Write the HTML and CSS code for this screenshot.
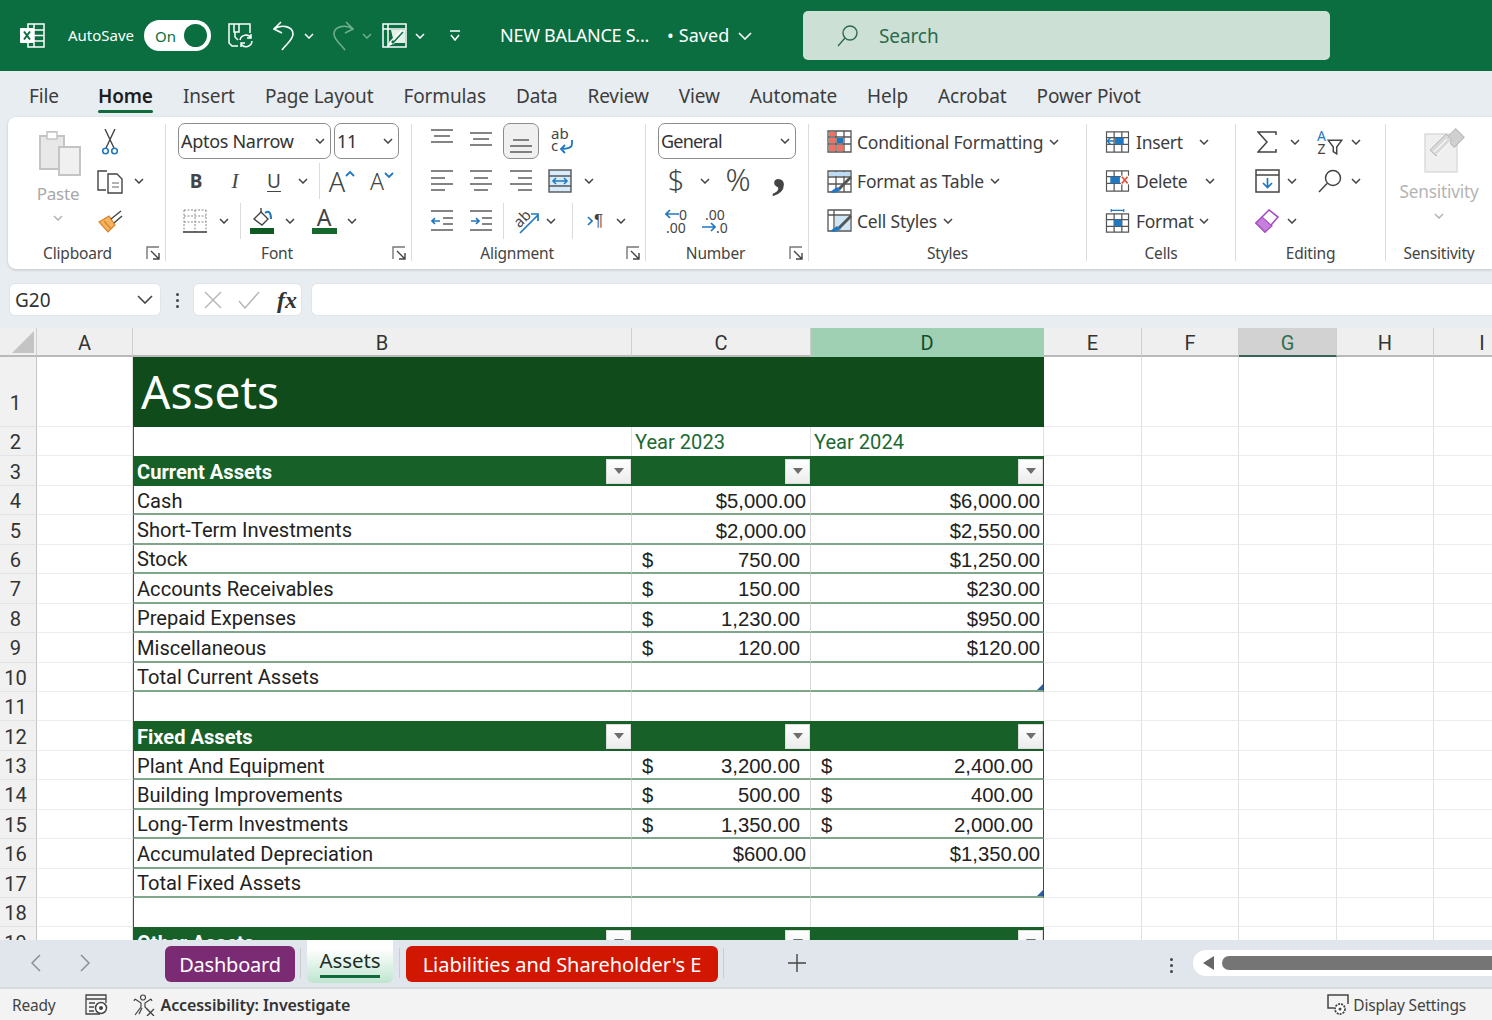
FILE: index.html
```html
<!DOCTYPE html>
<html lang="en">
<head>
<meta charset="utf-8">
<title>Assets - Excel</title>
<link rel="stylesheet" href="styles.css">
</head>
<body>
<svg class="defs" width="0" height="0" aria-hidden="true">
  <symbol id="chev" viewBox="0 0 10 6"><path d="M1 1l4 4 4-4" fill="none" stroke="#444" stroke-width="1.5"/></symbol>
  <symbol id="launch" viewBox="0 0 14 14"><path d="M1 13V1h12" fill="none" stroke="#777" stroke-width="1.4"/><path d="M5 5l8 8M13 7v6H7" fill="none" stroke="#444" stroke-width="1.4"/></symbol>
  <symbol id="tbl" viewBox="0 0 25 25"><path d="M1 2h23v21H1zM1 8h23M1 15h23M9 2v21M17 2v21" fill="none" stroke="#555" stroke-width="1.3"/></symbol>
</svg>

<header class="titlebar">
  <svg class="t-logo" width="25" height="25" viewBox="0 0 25 25"><path d="M8 1h16v23H8zM14 1v23M8 7h16M8 12.500h16M8 18h16" fill="none" stroke="#fff" stroke-width="1.5"/><rect x="0" y="5" width="14" height="15" rx="1" fill="#fff"/><path d="M4 8.500l6 8M10 8.500l-6 8" stroke="#0a6e40" stroke-width="2"/></svg>
  <span class="t-auto">AutoSave</span>
  <span class="toggle"><span class="on">On</span><span class="knob"></span></span>
  <svg class="t-save" width="26" height="25" viewBox="0 0 26 25"><path d="M10 23H4l-3-3V1h21v9M6 1v8h5V1M7 9v5l3 3" fill="none" stroke="#fff" stroke-width="1.5"/><path d="M12 17a6 6 0 0 1 11-2M24 18a6 6 0 0 1-11 3M23 11v4h-4M13 24v-4h4" fill="none" stroke="#fff" stroke-width="1.5"/></svg>
  <svg class="t-undo" width="22" height="30" viewBox="0 0 22 30"><path d="M8 1L1 8l8 4M1 8C8 3 20 5 20 13c0 6-7 10-11 16" fill="none" stroke="#fff" stroke-width="1.6"/></svg>
  <svg class="t-c1 tchev" width="10" height="6" viewBox="0 0 10 6"><path d="M1 1l4 4 4-4" fill="none" stroke="#fff" stroke-width="1.5"/></svg>
  <svg class="t-redo" width="22" height="30" viewBox="0 0 22 30"><path d="M14 1l7 7-8 4M21 8C14 3 2 5 2 13c0 6 7 10 11 16" fill="none" stroke="#6fae8f" stroke-width="1.6"/></svg>
  <svg class="t-c2 tchev" width="10" height="6" viewBox="0 0 10 6"><path d="M1 1l4 4 4-4" fill="none" stroke="#6fae8f" stroke-width="1.5"/></svg>
  <svg class="t-brush" width="25" height="25" viewBox="0 0 25 25"><path d="M1 1h23v23H1zM1 6h23M6 1v23" fill="none" stroke="#fff" stroke-width="1.5"/><path d="M9 7h14v13H12z" fill="#e3f0e8"/><path d="M23 8L11 21M20 7L8 19" stroke="#fff" stroke-width="1.4"/><path d="M21 9L10 21" stroke="#0a6e40" stroke-width="1.500"/><path d="M8 18l3 3-6 3z" fill="#fff"/></svg>
  <svg class="t-c3 tchev" width="10" height="6" viewBox="0 0 10 6"><path d="M1 1l4 4 4-4" fill="none" stroke="#fff" stroke-width="1.5"/></svg>
  <svg class="t-more" width="10" height="12" viewBox="0 0 10 12"><path d="M0 1h10M1 5l4 5 4-5" fill="none" stroke="#fff" stroke-width="1.5"/></svg>
  <span class="t-file">NEW BALANCE S...</span>
  <span class="t-saved">• Saved</span>
  <svg class="t-c4" width="14" height="8" viewBox="0 0 14 8"><path d="M1 1l6 6 6-6" fill="none" stroke="#fff" stroke-width="1.6"/></svg>
  <div class="search">
    <svg width="22" height="23" viewBox="0 0 22 23"><circle cx="13" cy="9" r="7" fill="none" stroke="#2c6a4b" stroke-width="1.4"/><path d="M8 14L1 22" stroke="#2c6a4b" stroke-width="1.4"/></svg>
    <span>Search</span>
  </div>
</header>

<nav class="tabs">
  <span>File</span><span class="active">Home</span><span>Insert</span><span>Page Layout</span><span>Formulas</span><span>Data</span><span>Review</span><span>View</span><span>Automate</span><span>Help</span><span>Acrobat</span><span>Power Pivot</span>
</nav>

<section class="ribbon">
  <div class="group g-clip">
    <div class="clip-body">
      <div class="paste">
        <svg width="44" height="48" viewBox="0 0 44 48"><path d="M2 7h8V3h8v4h8v33H2z" fill="#e8e8e8" stroke="#c4c4c4" stroke-width="2"/><rect x="9" y="3" width="10" height="7" fill="#fff" stroke="#c4c4c4" stroke-width="1.5"/><rect x="21" y="18" width="21" height="28" fill="#f0f0f0" stroke="#c4c4c4" stroke-width="2"/></svg>
        <span class="paste-t">Paste</span>
        <svg class="dim" width="10" height="6"><use href="#chev"/></svg>
      </div>
      <svg class="i-cut" width="16" height="26" viewBox="0 0 16 26"><path d="M3 0l9 19M13 0L4 19" stroke="#444" stroke-width="1.4" fill="none"/><circle cx="3.500" cy="22" r="2.800" fill="none" stroke="#1f78c1" stroke-width="1.6"/><circle cx="12.500" cy="22" r="2.800" fill="none" stroke="#1f78c1" stroke-width="1.6"/></svg>
      <span></span>
      <svg width="26" height="25" viewBox="0 0 26 25"><path d="M9 21H1V2h9" fill="none" stroke="#444" stroke-width="1.4"/><path d="M11 5h9l5 5v14H11z" fill="#fff" stroke="#444" stroke-width="1.4"/><path d="M15 14h7M15 18h7" stroke="#666" stroke-width="1.2"/></svg>
      <svg width="10" height="6"><use href="#chev"/></svg>
      <svg width="25" height="24" viewBox="0 0 25 24"><path d="M1 13L11 7l6 9-7 7z" fill="#f4b35e" stroke="#d9822b" stroke-width="1.2"/><path d="M13 10l10-8M16 14l8-7" stroke="#444" stroke-width="1.4"/><path d="M6 12l7 8" stroke="#d9822b" stroke-width="1.2"/></svg>
      <span></span>
    </div>
    <div class="lbl lbl-clip"><span>Clipboard</span><svg width="14" height="14"><use href="#launch"/></svg></div>
  </div>
  <i class="sep"></i>

  <div class="group g-font">
    <div class="rw r-sel">
      <div class="select s-font"><span>Aptos Narrow</span><svg width="10" height="6"><use href="#chev"/></svg></div>
      <div class="select s-size"><span>11</span><svg width="10" height="6"><use href="#chev"/></svg></div>
    </div>
    <div class="rw f2">
      <b class="glyph">B</b><em class="glyph ital">I</em><u class="glyph und">U</u>
      <svg width="10" height="6"><use href="#chev"/></svg>
      <i class="vsep"></i>
      <span class="bigA">A<svg width="10" height="7" viewBox="0 0 10 7"><path d="M1 6l4-4 4 4" fill="none" stroke="#1f78c1" stroke-width="1.8"/></svg></span>
      <span class="smA">A<svg width="10" height="7" viewBox="0 0 10 7"><path d="M1 1l4 4 4-4" fill="none" stroke="#1f78c1" stroke-width="1.8"/></svg></span>
    </div>
    <div class="rw f3">
      <svg width="24" height="24" viewBox="0 0 24 24"><path d="M1 1h22M1 7h22M1 13h22" stroke="#888" stroke-width="1" stroke-dasharray="2 1.500"/><path d="M1 1v22M23 1v22M12 1v22" stroke="#888" stroke-width="1" stroke-dasharray="2 1.500"/><path d="M0 23h24" stroke="#444" stroke-width="1.600"/></svg>
      <svg width="10" height="6"><use href="#chev"/></svg>
      <i class="vsep"></i>
      <svg width="26" height="27" viewBox="0 0 26 27"><path d="M5 12l7-7 7 7-6 6z" fill="none" stroke="#444" stroke-width="1.4"/><path d="M12 5V1" stroke="#444" stroke-width="1.4"/><path d="M16 6c4-3 6 0 6 6" fill="none" stroke="#1f78c1" stroke-width="2"/><rect x="1" y="21" width="24" height="6" fill="#0f5a22"/></svg>
      <svg width="10" height="6"><use href="#chev"/></svg>
      <span class="colorA"><span>A</span><i></i></span>
      <svg width="10" height="6"><use href="#chev"/></svg>
    </div>
    <div class="lbl"><span>Font</span><svg width="14" height="14"><use href="#launch"/></svg></div>
  </div>
  <i class="sep"></i>

  <div class="group g-align">
    <div class="rw a1">
      <svg class="al-top" width="22" height="15" viewBox="0 0 22 15"><path d="M0 1h22M3 7h16M0 13h22" stroke="#5c5c5c" stroke-width="1.700"/></svg>
      <svg class="al-mid" width="22" height="15" viewBox="0 0 22 15"><path d="M0 1h22M3 7h16M0 13h22" stroke="#5c5c5c" stroke-width="1.700"/></svg>
      <span class="active-btn"><svg width="22" height="15" viewBox="0 0 22 15"><path d="M3 2h16M0 8h22M0 14h22" stroke="#5c5c5c" stroke-width="1.700"/></svg></span>
      <svg class="wrap-i" width="26" height="30" viewBox="0 0 26 30"><text x="2" y="12" class="svt">ab</text><text x="2" y="24" class="svt">c</text><path d="M23 13v4c0 3-3 5-11 5M16 18l-4 4 4 4" fill="none" stroke="#1f78c1" stroke-width="1.800"/></svg>
    </div>
    <div class="rw a2">
      <svg width="22" height="22" viewBox="0 0 22 22"><path d="M0 1h22M0 8h14M0 14h22M0 20h14" stroke="#5c5c5c" stroke-width="1.700"/></svg>
      <svg width="22" height="22" viewBox="0 0 22 22"><path d="M0 1h22M4 8h14M0 14h22M4 20h14" stroke="#5c5c5c" stroke-width="1.700"/></svg>
      <svg width="22" height="22" viewBox="0 0 22 22"><path d="M0 1h22M8 8h14M0 14h22M8 20h14" stroke="#5c5c5c" stroke-width="1.700"/></svg>
      <svg width="24" height="24" viewBox="0 0 24 24"><rect x="1" y="1" width="22" height="22" fill="#d6ecfa" stroke="#555" stroke-width="1.400"/><path d="M1 7h22M1 17h22" stroke="#555" stroke-width="1.400"/><path d="M5 12h14M8 9l-3 3 3 3M16 9l3 3-3 3" fill="none" stroke="#1f78c1" stroke-width="1.500"/></svg>
      <svg width="10" height="6"><use href="#chev"/></svg>
    </div>
    <div class="rw a3">
      <svg width="22" height="22" viewBox="0 0 22 22"><path d="M0 1h22M12 8h10M12 14h10M0 20h22" stroke="#5c5c5c" stroke-width="1.700"/><path d="M9 11H1M4 8l-3 3 3 3" fill="none" stroke="#1f78c1" stroke-width="1.700"/></svg>
      <svg width="22" height="22" viewBox="0 0 22 22"><path d="M0 1h22M12 8h10M12 14h10M0 20h22" stroke="#5c5c5c" stroke-width="1.700"/><path d="M1 11h8M6 8l3 3-3 3" fill="none" stroke="#1f78c1" stroke-width="1.700"/></svg>
      <i class="vsep"></i>
      <svg width="30" height="30" viewBox="0 0 30 30"><text x="3" y="19" class="svt rot">ab</text><path d="M9 27L27 9M20 8h7v7" fill="none" stroke="#1f78c1" stroke-width="1.700"/></svg>
      <svg width="10" height="6"><use href="#chev"/></svg>
      <i class="vsep"></i>
      <span class="rtl"><svg width="6" height="10" viewBox="0 0 6 10"><path d="M1 1l4 4-4 4" fill="none" stroke="#1f78c1" stroke-width="1.700"/></svg>¶</span>
      <svg width="10" height="6"><use href="#chev"/></svg>
    </div>
    <div class="lbl"><span>Alignment</span><svg width="14" height="14"><use href="#launch"/></svg></div>
  </div>
  <i class="sep"></i>

  <div class="group g-num">
    <div class="rw r-sel">
      <div class="select s-num"><span>General</span><svg width="10" height="6"><use href="#chev"/></svg></div>
    </div>
    <div class="rw n2">
      <span class="sym">$</span>
      <svg width="10" height="6"><use href="#chev"/></svg>
      <span class="sym pct">%</span>
      <span class="comma">,</span>
    </div>
    <div class="rw n3">
      <span class="dec"><span class="d-a"><svg width="14" height="10" viewBox="0 0 14 10"><path d="M14 5H1M5 1L1 5l4 4" fill="none" stroke="#1f78c1" stroke-width="1.700"/></svg>0</span><span>.00</span></span>
      <span class="dec"><span>.00</span><span class="d-a"><svg width="14" height="10" viewBox="0 0 14 10"><path d="M0 5h13M9 1l4 4-4 4" fill="none" stroke="#1f78c1" stroke-width="1.700"/></svg>.0</span></span>
    </div>
    <div class="lbl"><span>Number</span><svg width="14" height="14"><use href="#launch"/></svg></div>
  </div>
  <i class="sep"></i>

  <div class="group g-styles">
    <div class="rw st">
      <svg width="25" height="25" viewBox="0 0 25 25"><use href="#tbl"/><rect x="2" y="9" width="6" height="5" fill="#f1705f"/><rect x="2" y="16" width="6" height="6" fill="#f1705f"/><rect x="2" y="3" width="6" height="4" fill="#f1705f"/><rect x="10" y="16" width="6" height="6" fill="#f1705f"/><rect x="10" y="9" width="6" height="5" fill="#1f78c1"/></svg>
      <span>Conditional Formatting</span><svg width="10" height="6"><use href="#chev"/></svg>
    </div>
    <div class="rw st">
      <svg width="25" height="25" viewBox="0 0 25 25"><use href="#tbl"/><rect x="2" y="3" width="21" height="4" fill="#bcdcf3"/><path d="M24 8L12 20" stroke="#555" stroke-width="3"/><path d="M10 18l4 3-7 3-4-1z" fill="#1f78c1"/></svg>
      <span>Format as Table</span><svg width="10" height="6"><use href="#chev"/></svg>
    </div>
    <div class="rw st">
      <svg width="25" height="25" viewBox="0 0 25 25"><path d="M1 2h23v21H1zM1 7h23M7 2v21" fill="none" stroke="#555" stroke-width="1.300"/><path d="M8 8h15v14H8z" fill="#cfe6f7"/><path d="M24 8L12 20" stroke="#555" stroke-width="3"/><path d="M10 18l4 3-7 3-4-1z" fill="#1f78c1"/></svg>
      <span>Cell Styles</span><svg width="10" height="6"><use href="#chev"/></svg>
    </div>
    <div class="lbl plain"><span>Styles</span></div>
  </div>
  <i class="sep"></i>

  <div class="group g-cells">
    <div class="rw ce ce-a">
      <svg width="25" height="24" viewBox="0 0 25 25"><use href="#tbl"/><rect x="10" y="8" width="9" height="7" fill="#1f78c1"/><path d="M9 11.500H2M5 8l-3 3.500L5 15" fill="none" stroke="#1f78c1" stroke-width="1.600"/></svg>
      <span>Insert</span><svg width="10" height="6"><use href="#chev"/></svg>
    </div>
    <div class="rw ce ce-b">
      <svg width="25" height="24" viewBox="0 0 25 25"><use href="#tbl"/><rect x="5" y="8" width="10" height="7" fill="#1f78c1"/><rect x="16" y="7" width="9" height="9" fill="#fff"/><path d="M17 8l6 7M23 8l-6 7" stroke="#e8503a" stroke-width="1.700"/></svg>
      <span>Delete</span><svg width="10" height="6"><use href="#chev"/></svg>
    </div>
    <div class="rw ce ce-a">
      <svg width="25" height="24" viewBox="0 0 25 25"><path d="M1 5h23v19H1zM1 11h23M1 18h23M9 5v19M17 5v19" fill="none" stroke="#555" stroke-width="1.300"/><rect x="9" y="11" width="8" height="7" fill="#1f78c1"/><path d="M6 1.500h13M6 0v3M19 0v3" stroke="#1f78c1" stroke-width="1.300"/></svg>
      <span>Format</span><svg width="10" height="6"><use href="#chev"/></svg>
    </div>
    <div class="lbl plain"><span>Cells</span></div>
  </div>
  <i class="sep"></i>

  <div class="group g-edit">
    <div class="rw e1">
      <svg width="20" height="22" viewBox="0 0 20 22"><path d="M19 4V1H1l9 10-9 10h18v-3" fill="none" stroke="#444" stroke-width="1.500"/></svg>
      <svg width="10" height="6"><use href="#chev"/></svg>
      <span></span>
      <span class="sort"><span class="az"><span class="a">A</span><span>Z</span></span><svg width="16" height="16" viewBox="0 0 14 14"><path d="M1 1h12L8.500 7v6l-3-2V7z" fill="none" stroke="#444" stroke-width="1.300"/></svg></span>
      <svg width="10" height="6"><use href="#chev"/></svg>
    </div>
    <div class="rw e2">
      <svg width="25" height="24" viewBox="0 0 25 24"><rect x="1" y="1" width="23" height="22" fill="none" stroke="#444" stroke-width="1.500"/><path d="M1 6h23" stroke="#444" stroke-width="1.500"/><path d="M12.500 9v9M8 14l4.500 4.500L17 14" fill="none" stroke="#1f78c1" stroke-width="1.700"/></svg>
      <svg width="10" height="6"><use href="#chev"/></svg>
      <span></span>
      <svg width="24" height="24" viewBox="0 0 24 24"><circle cx="15" cy="9" r="7.500" fill="none" stroke="#444" stroke-width="1.500"/><path d="M9 14.500L1 23" stroke="#444" stroke-width="1.500"/></svg>
      <svg width="10" height="6"><use href="#chev"/></svg>
    </div>
    <div class="rw e3">
      <svg width="24" height="24" viewBox="0 0 24 24"><path d="M1 14L14 1l9 7-13 15z" fill="#fff" stroke="#a64fc4" stroke-width="1.600"/><path d="M1 14l6-6 10 9-7 6z" fill="#c77fdc" stroke="#a64fc4" stroke-width="1.200"/></svg>
      <svg width="10" height="6"><use href="#chev"/></svg>
    </div>
    <div class="lbl plain"><span>Editing</span></div>
  </div>
  <i class="sep"></i>

  <div class="group g-sens">
    <div class="sens-body">
      <svg width="44" height="46" viewBox="0 0 44 46"><path d="M2 6h24l8 8v30H2z" fill="#efefef" stroke="#dcdcdc" stroke-width="1.500"/><rect x="26" y="3" width="12" height="14" transform="rotate(45 32 10)" fill="#d0d0d0" stroke="#b8b8b8"/><path d="M7 22l16-16 6 6-16 16z" fill="#d8d8d8" stroke="#b8b8b8"/><path d="M11 24L24 11M14 27L27 14" stroke="#f5f5f5" stroke-width="1.500"/></svg>
      <span class="sens-t">Sensitivity</span>
      <svg class="dim" width="10" height="6"><use href="#chev"/></svg>
    </div>
    <div class="lbl plain"><span>Sensitivity</span></div>
  </div>
</section>

<div class="fbar">
  <div class="namebox"><span>G20</span><svg width="16" height="9" viewBox="0 0 16 9"><path d="M1 1l7 7 7-7" fill="none" stroke="#444" stroke-width="1.600"/></svg></div>
  <span class="vdots"><i></i><i></i><i></i></span>
  <div class="fxbox">
    <svg width="18" height="18" viewBox="0 0 18 18"><path d="M1 1l16 16M17 1L1 17" stroke="#b5b5b5" stroke-width="1.400"/></svg>
    <svg width="22" height="18" viewBox="0 0 22 18"><path d="M1 10l6 7L21 1" fill="none" stroke="#b5b5b5" stroke-width="1.400"/></svg>
    <span class="fx">fx</span>
  </div>
  <div class="finput"></div>
</div>

<main class="sheet">
  <div class="row head"><span class="corner"><svg width="22" height="22" viewBox="0 0 22 22"><path d="M22 0v22H0z" fill="#c4c4c4"/></svg></span><span>A</span><span>B</span><span>C</span><span class="sel-d">D</span><span>E</span><span>F</span><span class="sel-g">G</span><span>H</span><span>I</span></div>

  <div class="row r1"><b class="rh">1</b><i></i><div class="title">Assets</div><i></i><i></i><i></i><i></i><i></i></div>
  <div class="row"><b class="rh">2</b><i></i><span class="t-blank"></span><span class="yr">Year 2023</span><span class="yr">Year 2024</span><i></i><i></i><i></i><i></i><i></i></div>
  <div class="row"><b class="rh">3</b><i></i><span class="th">Current Assets<a class="fb"></a></span><span class="th"><a class="fb"></a></span><span class="th"><a class="fb"></a></span><i></i><i></i><i></i><i></i><i></i></div>
  <div class="row"><b class="rh">4</b><i></i><span class="l">Cash</span><span class="n">$5,000.00</span><span class="n">$6,000.00</span><i></i><i></i><i></i><i></i><i></i></div>
  <div class="row"><b class="rh">5</b><i></i><span class="l">Short-Term Investments</span><span class="n">$2,000.00</span><span class="n">$2,550.00</span><i></i><i></i><i></i><i></i><i></i></div>
  <div class="row"><b class="rh">6</b><i></i><span class="l">Stock</span><span class="ac"><span>$</span><span>750.00</span></span><span class="n">$1,250.00</span><i></i><i></i><i></i><i></i><i></i></div>
  <div class="row"><b class="rh">7</b><i></i><span class="l">Accounts Receivables</span><span class="ac"><span>$</span><span>150.00</span></span><span class="n">$230.00</span><i></i><i></i><i></i><i></i><i></i></div>
  <div class="row"><b class="rh">8</b><i></i><span class="l">Prepaid Expenses</span><span class="ac"><span>$</span><span>1,230.00</span></span><span class="n">$950.00</span><i></i><i></i><i></i><i></i><i></i></div>
  <div class="row"><b class="rh">9</b><i></i><span class="l">Miscellaneous</span><span class="ac"><span>$</span><span>120.00</span></span><span class="n">$120.00</span><i></i><i></i><i></i><i></i><i></i></div>
  <div class="row"><b class="rh">10</b><i></i><span class="l">Total Current Assets</span><span class="n"></span><span class="n handle"></span><i></i><i></i><i></i><i></i><i></i></div>
  <div class="row"><b class="rh">11</b><i></i><span class="t-blank"></span><span class="t-blank"></span><span class="t-blank end"></span><i></i><i></i><i></i><i></i><i></i></div>
  <div class="row"><b class="rh">12</b><i></i><span class="th">Fixed Assets<a class="fb"></a></span><span class="th"><a class="fb"></a></span><span class="th"><a class="fb"></a></span><i></i><i></i><i></i><i></i><i></i></div>
  <div class="row"><b class="rh">13</b><i></i><span class="l">Plant And Equipment</span><span class="ac"><span>$</span><span>3,200.00</span></span><span class="ac ac-d"><span>$</span><span>2,400.00</span></span><i></i><i></i><i></i><i></i><i></i></div>
  <div class="row"><b class="rh">14</b><i></i><span class="l">Building Improvements</span><span class="ac"><span>$</span><span>500.00</span></span><span class="ac ac-d"><span>$</span><span>400.00</span></span><i></i><i></i><i></i><i></i><i></i></div>
  <div class="row"><b class="rh">15</b><i></i><span class="l">Long-Term Investments</span><span class="ac"><span>$</span><span>1,350.00</span></span><span class="ac ac-d"><span>$</span><span>2,000.00</span></span><i></i><i></i><i></i><i></i><i></i></div>
  <div class="row"><b class="rh">16</b><i></i><span class="l">Accumulated Depreciation</span><span class="n">$600.00</span><span class="n">$1,350.00</span><i></i><i></i><i></i><i></i><i></i></div>
  <div class="row"><b class="rh">17</b><i></i><span class="l">Total Fixed Assets</span><span class="n"></span><span class="n handle"></span><i></i><i></i><i></i><i></i><i></i></div>
  <div class="row"><b class="rh">18</b><i></i><span class="t-blank"></span><span class="t-blank"></span><span class="t-blank end"></span><i></i><i></i><i></i><i></i><i></i></div>
  <div class="row"><b class="rh">19</b><i></i><span class="th">Other Assets<a class="fb"></a></span><span class="th"><a class="fb"></a></span><span class="th"><a class="fb"></a></span><i></i><i></i><i></i><i></i><i></i></div>
</main>

<div class="sheetbar">
  <svg class="nav-l" width="10" height="18" viewBox="0 0 10 18"><path d="M9 1L1 9l8 8" fill="none" stroke="#8a8f94" stroke-width="1.500"/></svg>
  <svg class="nav-r" width="10" height="18" viewBox="0 0 10 18"><path d="M1 1l8 8-8 8" fill="none" stroke="#8a8f94" stroke-width="1.500"/></svg>
  <span class="stab purple">Dashboard</span>
  <i class="tsep ts1"></i>
  <span class="stab cur"><span>Assets</span></span>
  <i class="tsep ts2"></i>
  <span class="stab red">Liabilities and Shareholder's E</span>
  <i class="tsep"></i>
  <svg class="plus" width="18" height="18" viewBox="0 0 18 18"><path d="M9 0v18M0 9h18" stroke="#444" stroke-width="1.400"/></svg>
  <span class="vdots sb"><i></i><i></i><i></i></span>
  <div class="hscroll">
    <svg width="11" height="14" viewBox="0 0 11 14"><path d="M11 0v14L0 7z" fill="#666"/></svg>
    <span class="thumb"></span>
  </div>
</div>

<footer class="status">
  <span>Ready</span>
  <svg class="st-i1" width="23" height="21" viewBox="0 0 23 21"><path d="M15 20H1V1h20v8M1 5h20M4 9h6M4 13h5M4 17h5" fill="none" stroke="#444" stroke-width="1.300"/><circle cx="16" cy="14" r="5.500" fill="#fff" stroke="#444" stroke-width="1.500"/><circle cx="16" cy="14" r="2" fill="#444"/></svg>
  <svg class="st-i2" width="22" height="22" viewBox="0 0 22 22"><circle cx="10" cy="3.500" r="2.500" fill="none" stroke="#444" stroke-width="1.200"/><path d="M2 5l6 4v4l-6 8M18 5l-6 4v4l3 3M2 5l-1 2M18 5l1 2M6 20l3-6" fill="none" stroke="#444" stroke-width="1.200"/><path d="M14 15l7 7M21 15l-7 7" stroke="#444" stroke-width="1.400"/></svg>
  <b class="acc">Accessibility: Investigate</b>
  <span class="disp">
    <svg width="22" height="22" viewBox="0 0 22 22"><path d="M7 14H1V1h20v9" fill="none" stroke="#444" stroke-width="1.500"/><circle cx="13" cy="15" r="5" fill="#fff" stroke="#444" stroke-width="1.800" stroke-dasharray="2 1"/><circle cx="13" cy="15" r="1.500" fill="#444"/></svg>
    <span>Display Settings</span>
  </span>
</footer>
</body>
</html>
```

FILE: styles.css
```css
* { box-sizing: border-box; }
html, body { margin: 0; height: 100%; }
body {
  width: 1492px; height: 1020px; overflow: hidden;
  display: flex; flex-direction: column;
  font-family: "Noto Sans", "Open Sans", sans-serif;
  color: #333; background: #e8edf2;
}
.defs { position: absolute; }
svg { display: block; flex: none; }

/* title bar */
.titlebar {
  height: 71px; flex: none; background: #0a6e40; color: #fff;
  display: flex; align-items: center; padding-left: 20px;
}
.t-auto { margin: -2px 0 0 23px; font-size: 15px; width: 76px; white-space: nowrap; }
.toggle {
  margin-left: 0; width: 67px; height: 31px; border-radius: 16px; background: #fff;
  display: flex; align-items: center; justify-content: space-between; padding: 0 4px 0 11px;
}
.on { color: #0a6e40; font-size: 15px; }
.knob { width: 23px; height: 23px; border-radius: 50%; background: #0a6e40; }
.t-save { margin-left: 17px; }
.t-undo { margin-left: 19px; }
.t-c1 { margin-left: 9px; }
.t-redo { margin-left: 18px; }
.t-c2 { margin-left: 8px; }
.t-brush { margin-left: 10px; }
.t-c3 { margin-left: 8px; }
.t-more { margin-left: 25px; }
.t-file { margin: -2px 0 0 40px; font-size: 18px; width: 150px; white-space: nowrap; letter-spacing: -.27px; }
.t-saved { margin: -2px 0 0 17px; font-size: 18px; white-space: nowrap; width: 64px; letter-spacing: .1px; }
.t-c4 { margin-left: 7px; }
.search {
  margin: -1px 0 0 51px; width: 527px; height: 49px; border-radius: 5px; background: #cce0d6;
  display: flex; align-items: center; padding-left: 34px; gap: 20px;
  color: #2c6a4b; font-size: 19px;
}
.search span { padding-top: 1px; letter-spacing: -.1px; }

/* tabs */
.tabs {
  height: 46px; flex: none; display: flex; align-items: center; gap: 30px; padding: 3px 0 0 29px;
  font-size: 19px; color: #3d3d3d; letter-spacing: -.12px;
}
.tabs span:first-child { margin-right: 9px; }
.tabs .active { color: #1d1d1d; font-weight: 600; position: relative; }
.tabs .active::after {
  content: ""; position: absolute; left: 0; right: 0; bottom: -4px; height: 3px; background: #0f6b3c; border-radius: 2px;
}

/* ribbon */
.ribbon {
  height: 152px; flex: none; margin-left: 8px; background: #fff; border-radius: 8px 0 0 8px;
  box-shadow: 0 1px 3px rgba(0,0,0,.18); display: flex; padding-top: 5px;
}
.group { display: flex; flex-direction: column; flex: none; }
.sep { width: 1px; background: #dcdcdc; margin: 2px 0 8px; flex: none; }
.g-clip { width: 157px; }
.g-font { width: 245px; padding-left: 10px; }
.g-align { width: 233px; padding-left: 10px; }
.g-num { width: 162px; padding-left: 10px; }
.g-styles { width: 277px; padding-left: 18px; }
.g-cells { width: 148px; padding-left: 18px; }
.g-edit { width: 149px; padding-left: 14px; }
.g-sens { flex: 1; }

.rw { height: 39.5px; display: grid; grid-template-rows: 39.5px; align-items: center; justify-items: center; flex: none; }
.r-sel { display: flex; gap: 3px; padding: 1px 0 0 2px; align-items: flex-start; }
.lbl {
  height: 27px; margin-top: auto; margin-bottom: 3px; display: flex; align-items: center; font-size: 15.500px; color: #444; letter-spacing: -.2px;
}
.lbl > span { flex: 1; text-align: center; }
.lbl > svg { margin: 0 5px 0 4px; }
.g-font .lbl, .g-align .lbl, .g-num .lbl { margin-left: -10px; }
.lbl-clip { padding-left: 5px; }
.g-styles .lbl { margin-left: -18px; }
.g-cells .lbl { margin-left: -18px; }
.g-edit .lbl { margin-left: -14px; }
.dim { opacity: .4; }

.clip-body {
  display: grid; padding-left: 13px; grid-template-columns: 74px 30px 28px;
  grid-template-rows: repeat(3, 39.5px); align-items: center; justify-items: center;
}
.paste { grid-row: span 3; display: flex; flex-direction: column; align-items: center; align-self: start; padding: 7px 0 0 4px; }
.paste-t { color: #a8a8a8; font-size: 17px; line-height: 24px; margin: 5px 0 0 -4px; letter-spacing: -.2px; }
.paste .dim { margin: 9px 0 0 -4px; }

.select {
  height: 36px; border: 1px solid #8c8c8c; border-radius: 7px; display: flex; align-items: center;
  justify-content: space-between; padding: 0 5px 0 2px; font-size: 18px; color: #333; letter-spacing: -.3px;
}
.s-font { width: 153px; }
.s-size { width: 65px; }
.s-num { width: 138px; letter-spacing: -.8px; }
.f2 { grid-template-columns: 40px 38px 40px 18px 14px 32px 48px; }
.f3 { grid-template-columns: 38px 20px 12px 32px 24px 44px 12px; }
.glyph { font-size: 19px; color: #444; line-height: 1; }
.ital { font-family: "Liberation Serif", serif; font-size: 21px; }
.und { text-underline-offset: 3px; }
.vsep { width: 1px; height: 36px; background: #dcdcdc; display: block; }
.bigA, .smA { display: flex; align-items: flex-start; font-size: 27px; line-height: 1; font-weight: 300; color: #444; }
.smA { font-size: 23px; }
.bigA svg, .smA svg { margin-top: 2px; }
.colorA { display: flex; flex-direction: column; align-items: center; width: 25px; font-size: 23px; line-height: 21px; color: #444; }
.colorA i { display: block; width: 25px; height: 6px; background: #15682b; }

.a1 { grid-template-columns: 40px 38px 42px 40px; }
.a2 { grid-template-columns: 40px 38px 42px 36px 22px; }
.a3 { grid-template-columns: 40px 38px 6px 40px 10px 32px 14px 38px; }
.al-top { align-self: start; margin-top: 7px; }
.al-mid { align-self: start; margin-top: 10px; }
.active-btn {
  width: 36px; height: 36px; border: 1px solid #8c8c8c; border-radius: 7px; background: #f0f0f0;
  display: flex; align-items: flex-end; justify-content: center; padding-bottom: 5px; align-self: start; margin-top: 1px;
}
.svt { font-size: 15px; fill: #444; font-family: "Noto Sans", sans-serif; }
.rot { transform: rotate(-45deg); transform-origin: 10px 14px; }
.rtl { display: flex; align-items: center; gap: 1px; font-size: 17px; color: #444; font-family: "Liberation Sans", sans-serif; }

.n2 { grid-template-columns: 40px 18px 48px 34px; }
.n3 { grid-template-columns: 40px 38px; justify-content: start; }
.sym { font-size: 29px; color: #444; line-height: 1; font-weight: 300; margin-bottom: 4px; }
.pct { font-size: 31px; }
.comma { font-size: 56px; line-height: 12px; font-weight: 700; font-family: "Liberation Serif", serif; color: #444; height: 26px; align-self: start; }
.dec { display: flex; flex-direction: column; align-items: center; font-size: 14px; line-height: 13px; color: #444; }
.d-a { display: flex; align-items: center; }

.st { display: flex; align-items: center; gap: 5px; font-size: 17.500px; color: #3d3d3d; letter-spacing: -.2px; white-space: nowrap; }
.st svg:last-child { margin-left: 1px; }
.ce { grid-template-columns: 25px 57px 10px; column-gap: 6px; justify-items: start; font-size: 17.500px; color: #3d3d3d; letter-spacing: -.3px; }
.ce-b { grid-template-columns: 25px 63px 10px; }

.e1 { grid-template-columns: 34px 22px 4px 40px 12px; justify-content: start; }
.e2 { grid-template-columns: 34px 16px 10px 40px 12px; justify-content: start; }
.e3 { grid-template-columns: 34px 16px; justify-content: start; }
.sort { display: flex; align-items: flex-end; gap: 1px; }
.az { display: flex; flex-direction: column; align-items: center; font-size: 14px; line-height: 13px; color: #444; }
.a { color: #1f78c1; }

.sens-body { display: flex; flex-direction: column; align-items: center; padding: 6px 0 0 12px; color: #b4b4b4; }
.sens-t { font-size: 17.200px; margin: 6px 0 0 -12px; line-height: 24px; letter-spacing: -.2px; }
.sens-body .dim { margin: 9px 0 0 -12px; }

/* formula bar */
.fbar { height: 59px; flex: none; display: flex; align-items: flex-start; padding: 14px 0 0 9px; }
.namebox, .fxbox, .finput { height: 33px; background: #fff; border: 1px solid #e0e4e8; border-radius: 6px; }
.namebox { width: 152px; display: flex; align-items: center; justify-content: space-between; padding: 0 7px 0 5px; font-size: 19px; color: #333; }
.vdots { width: 3px; display: flex; flex-direction: column; gap: 3px; }
.vdots i { display: block; width: 3px; height: 3px; border-radius: 50%; background: #444; }
.fbar .vdots { margin: 10px 0 0 15px; }
.fxbox { width: 109px; margin-left: 14px; display: flex; align-items: center; padding-left: 10px; gap: 16px; }
.fx { font-family: "Liberation Serif", serif; font-style: italic; font-weight: 700; font-size: 24px; color: #333; margin-left: 1px; line-height: 1; }
.finput { flex: 1; margin-left: 9px; border-right: 0; border-radius: 6px 0 0 6px; }

/* sheet */
.sheet { height: 612px; flex: none; background: #fff; overflow: hidden; font-family: Roboto, "Liberation Sans", sans-serif; }
.row {
  display: grid; height: 29.450px; width: 1530px;
  grid-template-columns: 37px 96px 499px 179px 233px 98px 97px 98px 97px 97px;
  font-size: 20.100px; color: #222;
}
.row > * { display: flex; align-items: center; min-width: 0; white-space: nowrap; font-style: normal; }
.row > i { border-right: 1px solid #e1e1e1; border-bottom: 1px solid #ececec; }
.rh { background: #f1f1f1; border-right: 1px solid #c4c4c4; border-bottom: 1px solid #e4e4e4; justify-content: center; font-weight: 400; color: #333; padding: 2px 5px 0 0; }
.head { height: 29px; background: #efefef; color: #333; font-size: 20px; }
.head > span { justify-content: center; border-right: 1px solid #cfcfcf; border-bottom: 2px solid #b9b9b9; padding-top: 3px; }
.corner { align-items: flex-end !important; padding: 0 0 2px 12px !important; justify-content: flex-start !important; }
.sel-d { background: #9fd0b3; color: #144d2d; border-right-color: #9fd0b3 !important; border-bottom-color: #9fd0b3 !important; }
.sel-g { background: #d2d2d2; color: #2f6f52; border-bottom: 2px solid #39645a !important; }
.r1 { height: 70px; }
.r1 .rh { align-items: flex-end; padding-bottom: 11px; }
.title {
  grid-column: span 3; background: #0f4b1b; color: #fff; font-size: 46px; padding-left: 8px;
  font-family: "Noto Sans", sans-serif; padding-bottom: 2px;
}
.yr { color: #1c6a33; padding: 0 0 0 3px; border-right: 1px solid #e1e1e1; }
.t-blank { border-right: 1px solid #e1e1e1; }
.row > .t-blank:nth-child(3) { border-left: 1px solid #1f6a33; }
.th { background: #176027; color: #fff; font-weight: 700; padding: 2px 0 0 4px; }
.fb {
  width: 25px; height: 25px; background: linear-gradient(#fff, #ececec); border: 1px solid #dcdcdc; margin: -2px 1px 0 auto;
  display: flex; align-items: center; justify-content: center; flex: none;
}
.fb::after { content: ""; border: 5px solid transparent; border-top: 6px solid #6e6e6e; border-bottom: 0; }
.l { border-left: 1px solid #1f6a33; border-bottom: 2px solid #7fa68a; border-right: 1px solid #d9d9d9; padding: 2px 0 0 3px; }
.n { justify-content: flex-end; padding: 4px 4px 0 0; border-bottom: 2px solid #7fa68a; border-right: 1px solid #d9d9d9; font-family: "Liberation Sans", sans-serif; font-size: 20.300px; }
.ac { justify-content: space-between; padding: 4px 10px 0; border-bottom: 2px solid #7fa68a; border-right: 1px solid #d9d9d9; font-family: "Liberation Sans", sans-serif; font-size: 20.300px; }
.row > :nth-child(5).n, .row > :nth-child(5).ac { border-right: 1.500px solid #1f5a2e; }
.row > :nth-child(5).n { padding-right: 3px; }
.handle { position: relative; }
.handle::after {
  content: ""; position: absolute; right: 0; bottom: 0; border: 3px solid transparent;
  border-right-color: #2f5f9e; border-bottom-color: #2f5f9e;
}

/* sheet bar */
.sheetbar {
  height: 49px; flex: none; background: #e1e6ec; border-bottom: 2px solid #d8dbde; display: flex; align-items: flex-start; position: relative;
}
.nav-l { margin: 14px 0 0 31px; }
.nav-r { margin: 14px 0 0 39px; }
.stab { font-size: 20px; color: #fff; border-radius: 6px; display: flex; align-items: center; justify-content: center; white-space: nowrap; letter-spacing: -.2px; }
.purple { margin: 6px 0 0 75px; width: 130px; height: 36px; background: #7b2b73; }
.red { width: 312px; height: 36px; margin-top: 6px; background: #d21700; letter-spacing: -.04px; }
.cur {
  width: 86px; height: 43px; color: #1e2e25; background: linear-gradient(#fff 20%, #bfe5d0); border-radius: 0 0 6px 6px; flex-direction: column; justify-content: flex-end;
}
.cur span { border-bottom: 3px solid #0f6b3c; line-height: 27px; padding-bottom: 1px; margin-bottom: 5px; font-size: 20.500px; letter-spacing: -.1px; }
.tsep { width: 1px; height: 30px; background: #c8cdd2; margin: 8px 5px 0 5px; flex: none; }
.ts1 { margin-right: 6px; }
.ts2 { margin: 8px 6px 0 6px; }
.plus { margin: 14px 0 0 59px; }
.vdots.sb { margin: 18px 0 0 364px; }
.hscroll {
  margin: 10px 0 0 20px; flex: 1; height: 26px; background: #fff; border-radius: 13px 0 0 13px;
  display: flex; align-items: center; padding-left: 10px; gap: 8px;
}
.thumb { flex: 1; height: 14px; background: #757575; border-radius: 7px 0 0 7px; }

/* status */
.status {
  flex: 1; background: #f3f3f3; display: flex; align-items: center; padding: 0 26px 0 12px;
  font-size: 15.500px; color: #444; letter-spacing: -.2px;
}
.st-i1 { margin-left: 29px; }
.st-i2 { margin-left: 25px; }
.acc { margin-left: 6px; font-weight: 600; color: #333; font-size: 16px; letter-spacing: -.1px; }
.disp { margin-left: auto; display: flex; align-items: center; gap: 4px; }
```
